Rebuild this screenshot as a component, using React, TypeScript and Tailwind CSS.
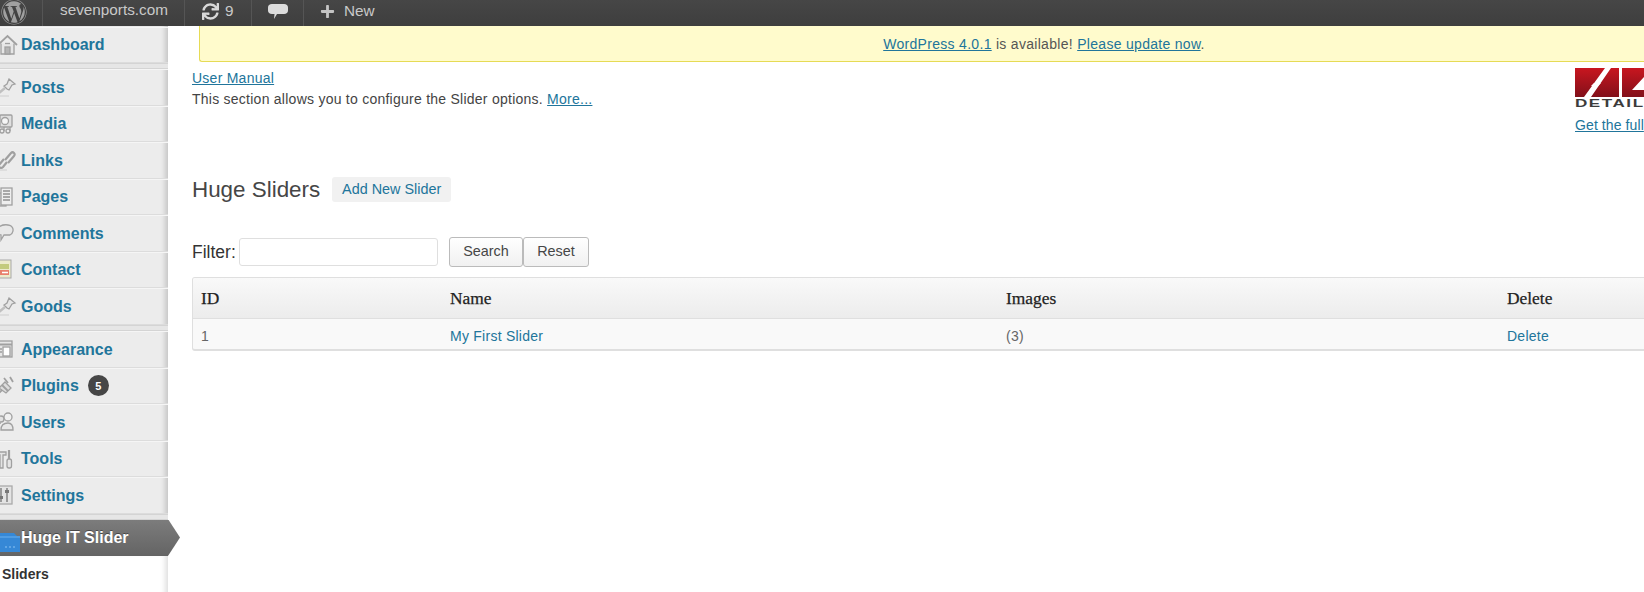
import { FaPlus, FaSync, FaWordpress } from "react-icons/fa";
import type { ReactNode } from "react";

const Gray = ({ children }: { children: ReactNode }) => (
  <svg width="22" height="22" viewBox="0 0 22 22" className="-ml-[3px] shrink-0" fill="none" stroke="#a0a0a0" strokeWidth="1.3">
    {children}
  </svg>
);

const HouseIcon = () => (
  <Gray>
    <path d="M1 11 10.500 2 20 11" strokeWidth="1.800" />
    <path d="M4 9.500V20h13V9.500" fill="#e6e6e6" />
    <rect x="8" y="13" width="5" height="7" fill="#b5b5b5" />
    <path d="M8 9.500h5" />
  </Gray>
);
const PinIcon = () => (
  <Gray>
    <path d="m12 3 6 5-3 1-3 5-2-1-3-3 3-2z" fill="#e6e6e6" />
    <path d="M8 12 2 17" strokeWidth="2.400" stroke="#c0c0c0" />
    <path d="M0 20h12" stroke="#d6d6d6" />
  </Gray>
);
const MediaIcon = () => (
  <Gray>
    <rect x="3" y="2" width="12" height="12" rx="1" fill="#e0e0e0" />
    <circle cx="8" cy="8" r="3.500" fill="#f6f6f6" />
    <circle cx="5" cy="18" r="2" />
    <circle cx="11" cy="18" r="2" />
    <path d="M7 18v-4M13 18v-4" />
  </Gray>
);
const LinkIcon = () => (
  <Gray>
    <path d="m8 11 6-7c2-2 5 1 3 3l-6 7" strokeWidth="2.200" />
    <path d="m7 10-5 6c-1 2 2 4 4 2l4-5" strokeWidth="2.200" />
    <path d="M0 21h10" stroke="#d6d6d6" />
  </Gray>
);
const PagesIcon = () => (
  <Gray>
    <rect x="0" y="7" width="9" height="13" fill="#d4d4d4" />
    <rect x="4" y="2" width="11" height="17" fill="#eee" />
    <path d="M6 5h7M6 8h7M6 11h7M6 14h7" strokeWidth="1.500" stroke="#909090" />
  </Gray>
);
const CommentIcon = () => (
  <Gray>
    <path d="M2 5c3-3 11-3 13 0 2 2 1 7-2 8H7l-3 5 0-5C0 12 0 7 2 5z" fill="#e8e8e8" />
  </Gray>
);
const ContactIcon = () => (
  <svg width="22" height="22" viewBox="0 0 22 22" className="-ml-[3px] shrink-0">
    <rect x="0" y="1" width="14" height="18" fill="#ecebcc" stroke="#a8a8a8" />
    <rect x="0" y="5" width="12" height="5" fill="#c3cb7d" />
    <rect x="0" y="11" width="12" height="5" fill="#e8806c" />
    <path d="M5 13.500h6" stroke="#fff" strokeWidth="1.500" />
  </svg>
);
const AppearanceIcon = () => (
  <Gray>
    <rect x="0" y="3" width="15" height="16" fill="#e6e6e6" />
    <path d="M0 6.500h15" strokeWidth="2" stroke="#a0a0a0" />
    <rect x="6" y="9" width="7" height="9" fill="#fff" />
    <path d="M1 11h4M1 14h4" />
  </Gray>
);
const PluginsIcon = () => (
  <Gray>
    <path d="m2 13 6-6 6 6-5 5z" fill="#dcdcdc" />
    <path d="m7 3 4 5M13 2l3 5M1 19l4-4M5 10l6 6" strokeWidth="1.800" />
  </Gray>
);
const UsersIcon = () => (
  <Gray>
    <circle cx="4" cy="8" r="3" fill="#e2e2e2" />
    <circle cx="11" cy="6" r="4" fill="#f0f0f0" />
    <path d="M0 16c0-3 2-4 4-4M4 19c0-5 3-7 7-7s5 3 5 7z" fill="#e8e8e8" />
  </Gray>
);
const ToolsIcon = () => (
  <Gray>
    <path d="M0 4h9v3H6v13H3V7H0z" fill="#e4e4e4" />
    <rect x="10" y="11" width="4.500" height="9" rx="2" fill="#e4e4e4" />
    <path d="M12 2v9" strokeWidth="2.200" />
  </Gray>
);
const SettingsIcon = () => (
  <Gray>
    <rect x="0" y="2" width="15" height="18" fill="#e4e4e4" stroke="#aaa" />
    <path d="M4 4v14M10 4v14" strokeWidth="2" stroke="#9a9a9a" />
    <rect x="2" y="12" width="4" height="3" fill="#777" stroke="none" />
    <rect x="8" y="6" width="4" height="3" fill="#777" stroke="none" />
  </Gray>
);
const FolderIcon = () => (
  <svg width="21" height="20" viewBox="0 0 21 20" className="mt-[12px] shrink-0">
    <path d="M0 1h14l3 3h3v16H0z" fill="#3688d6" />
    <path d="M0 5h20" stroke="#6ab0ee" />
    <path d="M5 15h2M9 15h2M13 15h2" stroke="#8cc4f4" />
  </svg>
);
const BubbleIcon = () => (
  <svg width="20" height="16" viewBox="0 0 20 16" className="shrink-0" fill="#dcdcdc">
    <path d="M4 0h12c2.500 0 4 1.500 4 3.500v3c0 2-1.500 3.500-4 3.500H9l-3 5 .5-5H4C1.500 10 0 8.500 0 6.500v-3C0 1.500 1.500 0 4 0z" />
  </svg>
);

const MenuRow = ({ label, icon, badge }: { label: string; icon: ReactNode; badge?: string }) => (
  <div className="flex h-[36.5px] items-center border-t border-b border-t-[#f5f5f5] border-b-[#dcdcdc]">
    <span className="w-[21px] shrink-0">{icon}</span>
    <span className="pt-[1px] text-[16px] leading-none font-bold text-[#21759b]">{label}</span>
    {badge && (
      <span className="ml-[9px] flex h-[21px] w-[21px] items-center justify-center rounded-full bg-[#464646] text-[11px] font-bold text-white">
        {badge}
      </span>
    )}
  </div>
);

const Separator = ({ h }: { h: string }) => (
  <div className={`${h} border-y border-[#d4d4d4] bg-[#e6e6e6]`} />
);

const Sidebar = () => (
  <aside className="w-[168px] shrink-0 bg-[#ececec] shadow-[inset_-6px_0_5px_-3px_rgba(0,0,0,0.16)]">
    <div className="pt-[0.5px]">
      <MenuRow label="Dashboard" icon={<HouseIcon />} />
    </div>
    <Separator h="h-[6px]" />
    <MenuRow label="Posts" icon={<PinIcon />} />
    <MenuRow label="Media" icon={<MediaIcon />} />
    <MenuRow label="Links" icon={<LinkIcon />} />
    <MenuRow label="Pages" icon={<PagesIcon />} />
    <MenuRow label="Comments" icon={<CommentIcon />} />
    <MenuRow label="Contact" icon={<ContactIcon />} />
    <MenuRow label="Goods" icon={<PinIcon />} />
    <Separator h="h-[6.500px]" />
    <MenuRow label="Appearance" icon={<AppearanceIcon />} />
    <MenuRow label="Plugins" icon={<PluginsIcon />} badge="5" />
    <MenuRow label="Users" icon={<UsersIcon />} />
    <MenuRow label="Tools" icon={<ToolsIcon />} />
    <MenuRow label="Settings" icon={<SettingsIcon />} />
    <Separator h="h-[6px]" />
    <div className="relative flex h-[36px] items-center bg-gradient-to-b from-[#7c7c7c] to-[#646464]">
      <span className="flex h-full w-[21px] shrink-0 items-start">
        <FolderIcon />
      </span>
      <span className="text-[16px] leading-none font-bold text-white [text-shadow:0_-1px_0_rgba(0,0,0,0.4)]">
        Huge IT Slider
      </span>
      <span className="absolute top-0 left-full -ml-[6px] h-full w-[18px] bg-gradient-to-b from-[#7c7c7c] to-[#646464] [clip-path:polygon(0_0,35%_0,100%_50%,35%_100%,0_100%)]" />
    </div>
    <div className="h-[38px] bg-white pl-[2px] pt-[11px] text-[14px] leading-none font-bold text-[#333] shadow-[inset_-6px_0_5px_-3px_rgba(0,0,0,0.12)]">
      Sliders
    </div>
  </aside>
);

const TopBar = () => (
  <header className="flex h-[26px] shrink-0 items-stretch bg-gradient-to-b from-[#464646] to-[#3e3e3e] text-[15.300px] text-[#c9c9c9]">
    <div className="flex w-[43px] items-center border-r border-[#555] pl-[1px]">
      <FaWordpress className="-mt-[3px] text-[26px] text-[#a0a0a0]" />
    </div>
    <div className="flex w-[142px] items-center border-r border-[#555] pl-[17px] pb-[5px]">sevenports.com</div>
    <div className="flex w-[67px] items-center border-r border-[#555] pl-[17px] pb-[4px]">
      <FaSync className="text-[17px] text-[#d8d8d8]" />
      <span className="ml-[6px]">9</span>
    </div>
    <div className="flex w-[52px] items-center border-r border-[#555] pl-[16px] pb-[2px]">
      <BubbleIcon />
    </div>
    <div className="flex items-center pl-[16px] pb-[4px]">
      <FaPlus className="text-[15px] text-[#c4c4c4]" />
      <span className="ml-[9px]">New</span>
    </div>
  </header>
);

const HugeLogo = () => (
  <svg width="69" height="29" viewBox="0 0 69 29" className="block">
    <defs>
      <linearGradient id="red" x1="0" y1="0" x2="0" y2="1">
        <stop offset="0" stopColor="#c8161f" />
        <stop offset="1" stopColor="#82101a" />
      </linearGradient>
    </defs>
    <path d="M0 0h30L9 29H0zM36 0h8v29H16z" fill="url(#red)" />
    <path d="M47 0h22v9L57 22h12v7H47z" fill="url(#red)" />
    <path d="M19 15h7l-3 3h-7z" fill="#fff" />
  </svg>
);

export default function App() {
  return (
    <div className="flex h-[592px] w-[1644px] flex-col overflow-hidden bg-white font-['Liberation_Sans',Arial,sans-serif]">
      <TopBar />
      <div className="flex flex-1">
        <Sidebar />
        <main className="w-[1720px] shrink-0">
          <div className="ml-[31px] flex h-[36px] items-center justify-center rounded-bl-[3px] border-b border-l border-[#e6db55] bg-[#fffbcc] pt-[1px] text-[14px] tracking-[0.3px] text-[#555]">
            <span>
              <a className="text-[#21759b] underline">WordPress 4.0.1</a> is available!{" "}
              <a className="text-[#21759b] underline">Please update now</a>.
            </span>
          </div>

          <div className="pl-[24px]">
            <div className="flex justify-between pt-[6px]">
              <div className="text-[14px] leading-[21px] tracking-[0.25px] text-[#444]">
                <a className="block text-[#21759b] underline">User Manual</a>
                <p>
                  This section allows you to configure the Slider options.{" "}
                  <a className="text-[#21759b] underline">More...</a>
                </p>
              </div>
              <div className="w-[313px]">
                <HugeLogo />
                <div className="mt-[2px] origin-left scale-x-[1.55] text-[11px] leading-[9px] font-bold tracking-[1px] text-[#3c3c3c]">
                  DETAIL
                </div>
                <a className="mt-[7px] block text-[14px] leading-[21px] tracking-[0.1px] text-[#21759b] underline">
                  Get the full
                </a>
              </div>
            </div>

            <div className="mt-[41px] flex h-[25px] items-center">
              <h2 className="pt-[2px] text-[22.400px] leading-none text-[#464646]">Huge Sliders</h2>
              <a className="ml-[12px] flex h-[25px] w-[119px] items-center justify-center rounded-[3px] bg-[#f1f1f1] text-[14.400px] text-[#21759b]">
                Add New Slider
              </a>
            </div>

            <div className="mt-[35px] flex h-[30px] items-center">
              <label className="w-[47px] text-[17.500px] text-[#333]">Filter:</label>
              <input className="h-[28px] w-[199px] rounded-[3px] border border-[#dfdfdf] bg-white" />
              <button className="ml-[11px] h-[30px] w-[74px] rounded-[3px] border border-[#bbb] bg-gradient-to-b from-white to-[#f1f1f1] text-[14.400px] text-[#464646]">
                Search
              </button>
              <button className="h-[30px] w-[66px] rounded-[3px] border border-[#bbb] bg-gradient-to-b from-white to-[#f1f1f1] text-[14.400px] text-[#464646]">
                Reset
              </button>
            </div>

            <div className="mt-[10px] overflow-hidden rounded-[3px] border-x border-t border-b-2 border-[#dfdfdf] bg-[#f9f9f9]">
              <div className="grid h-[41px] grid-cols-[249px_556px_501px_1fr] items-center border-b border-[#dfdfdf] bg-gradient-to-b from-[#f9f9f9] to-[#ececec] pl-[8px] font-['Liberation_Serif',serif] text-[17.400px] text-[#222] [-webkit-text-stroke:0.25px_#222]">
                <span>ID</span>
                <span>Name</span>
                <span>Images</span>
                <span>Delete</span>
              </div>
              <div className="grid h-[30px] grid-cols-[249px_556px_501px_1fr] items-center pl-[8px] pt-[5px] text-[14px] tracking-[0.25px] text-[#666]">
                <span>1</span>
                <a className="text-[#21759b]">My First Slider</a>
                <span>(3)</span>
                <a className="text-[#21759b]">Delete</a>
              </div>
            </div>
          </div>
        </main>
      </div>
    </div>
  );
}
